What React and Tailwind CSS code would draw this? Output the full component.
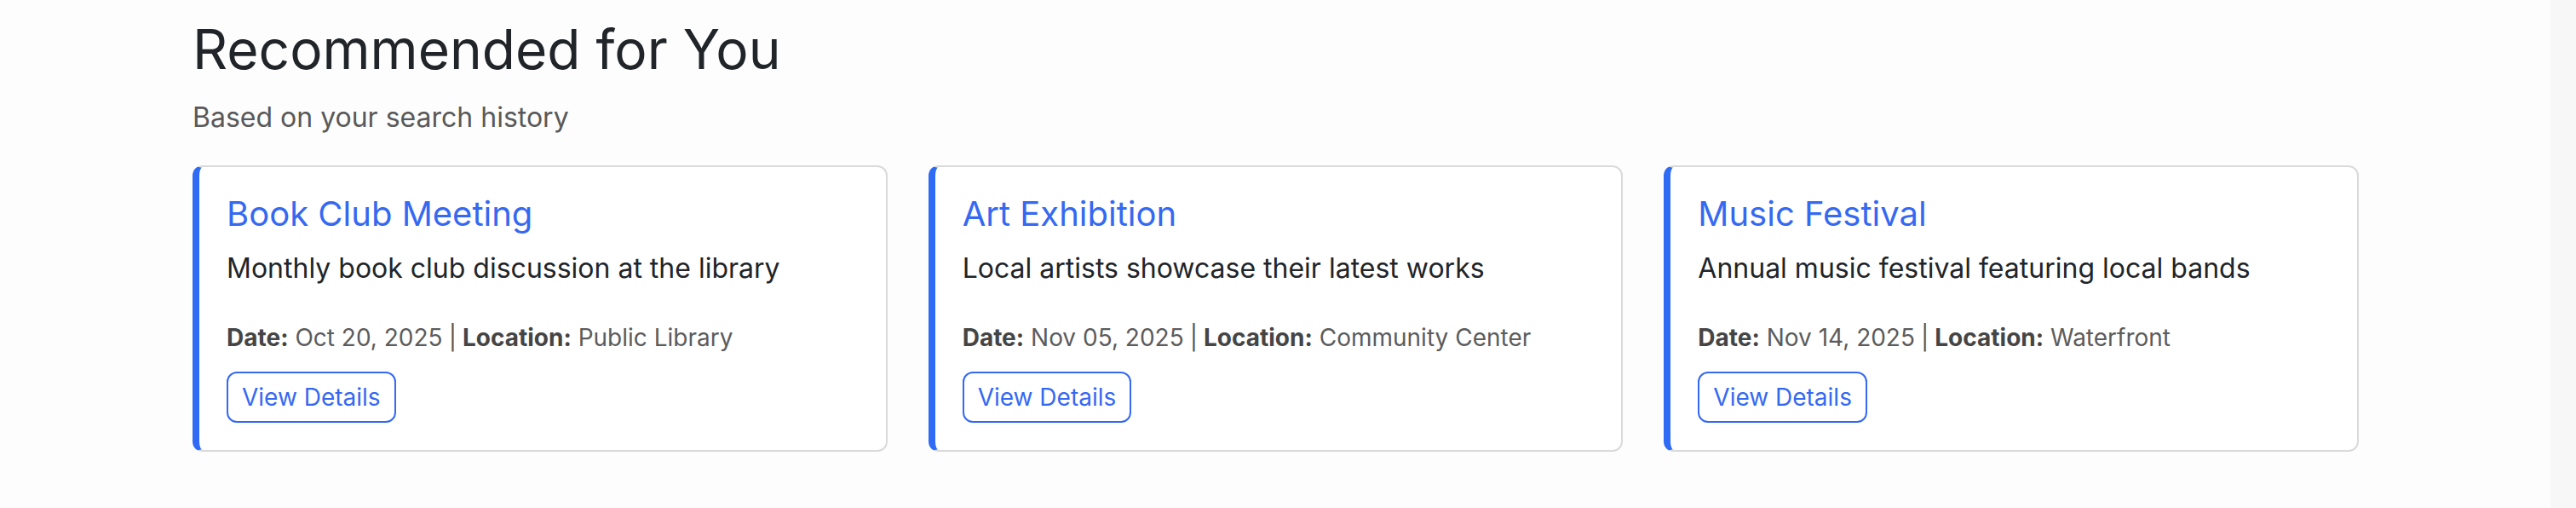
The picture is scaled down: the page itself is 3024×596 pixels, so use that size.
import React from "react";

const events = [
  {
    title: "Book Club Meeting",
    desc: "Monthly book club discussion at the library",
    date: "Oct 20, 2025",
    location: "Public Library",
  },
  {
    title: "Art Exhibition",
    desc: "Local artists showcase their latest works",
    date: "Nov 05, 2025",
    location: "Community Center",
  },
  {
    title: "Music Festival",
    desc: "Annual music festival featuring local bands",
    date: "Nov 14, 2025",
    location: "Waterfront",
  },
];

function EventCard({ title, desc, date, location }) {
  return (
    <div className="bg-white border-2 border-[#dadada] border-l-[8px] border-l-[#2f6bf4] rounded-[12px] pt-[31px] pb-[32px] pl-[32px] pr-[30px]">
      <h5 className="text-[40px] leading-[1.2] text-[#3569f2] mb-[16px]">{title}</h5>
      <p className="text-[32px] leading-[1.5] text-[#212529] mb-[36px]">{desc}</p>
      <div className="text-[28px] leading-[1.5] text-[#5c5c5c]">
        <span className="font-bold text-[#454545]">Date:</span> {date}
        <span className="mx-[7px] text-[#555]">|</span>
        <span className="font-bold text-[#454545]">Location:</span> {location}
      </div>
      <button className="mt-[19px] border-2 border-[#3569f2] text-[#3569f2] rounded-[12px] px-[16px] py-[7px] text-[28px] leading-[1.5] bg-white">
        View Details
      </button>
    </div>
  );
}

export default function App() {
  return (
    <div className="flex w-full h-[596px] bg-[#fdfdfd] font-['Inter','Liberation_Sans',sans-serif] overflow-hidden">
      <main className="flex-1">
        <section className="w-[2543px] ml-[226px] pt-[20px]">
          <h2 className="text-[64px] leading-[1.2] text-[#212529]">Recommended for You</h2>
          <p className="mt-[17px] text-[32px] leading-[1.5] text-[#595959]">Based on your search history</p>
          <div className="mt-[32px] grid grid-cols-3 gap-[48px]">
            {events.map((e) => (
              <EventCard key={e.title} {...e} />
            ))}
          </div>
        </section>
      </main>
      <div className="w-[30px] bg-[#f7f7f7]" />
    </div>
  );
}
